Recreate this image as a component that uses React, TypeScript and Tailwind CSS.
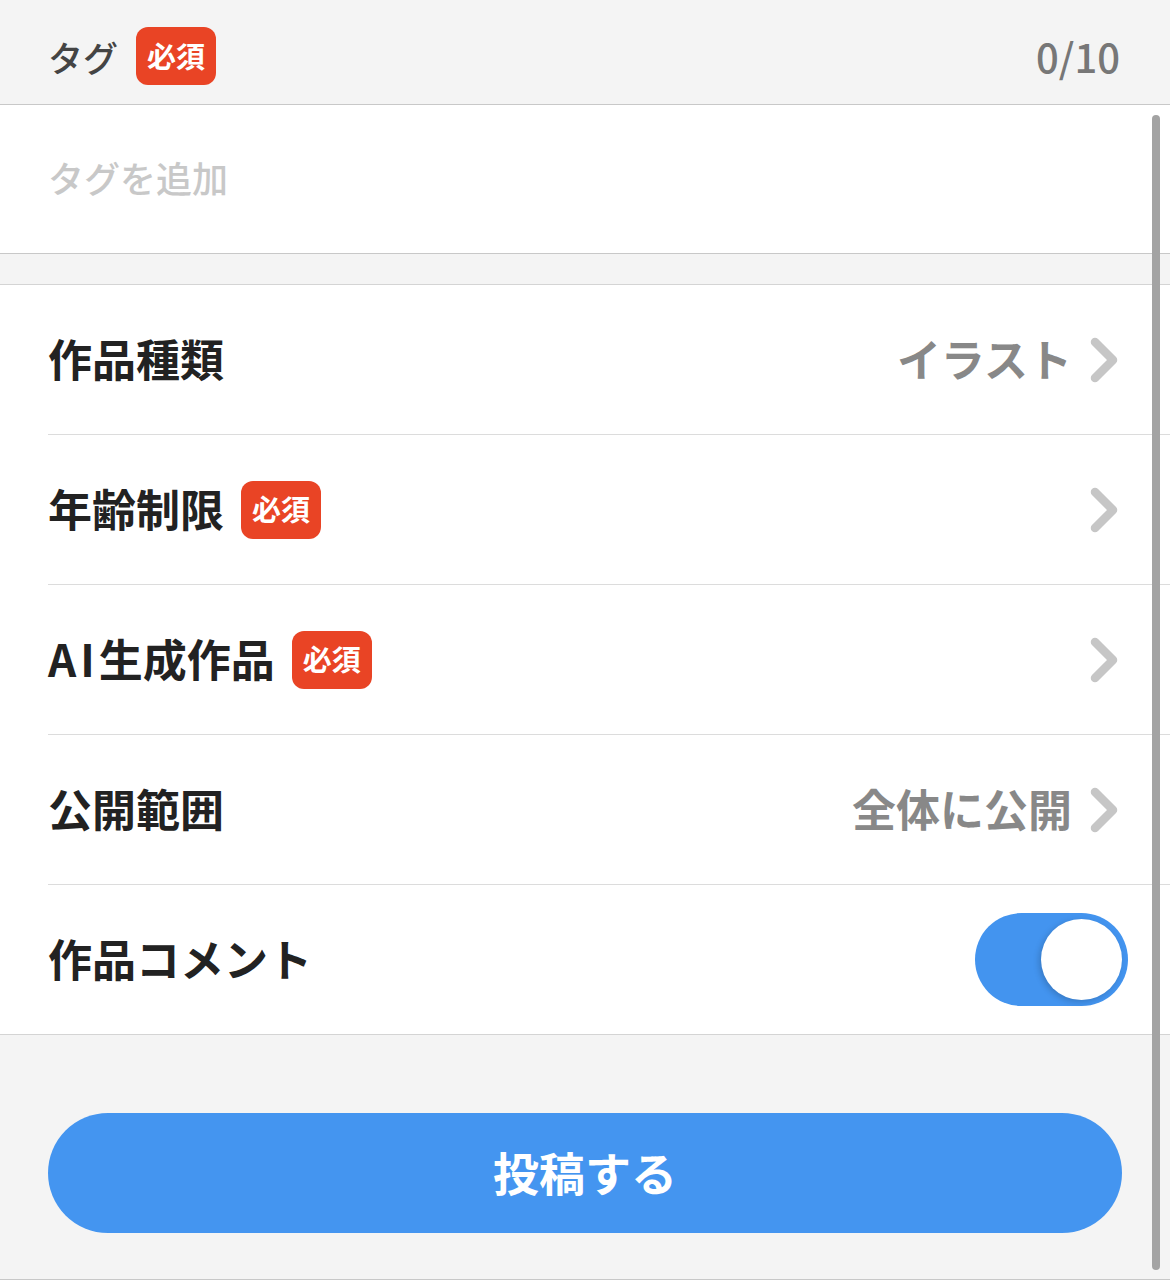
import React from "react";

// ---------- Tipos ----------
type Row = {
  label: string;
  required?: boolean;
  value?: string;
  toggle?: boolean;
};

const rows: Row[] = [
  { label: "作品種類", value: "イラスト" },
  { label: "年齢制限", required: true },
  { label: "AI生成作品", required: true },
  { label: "公開範囲", value: "全体に公開" },
  { label: "作品コメント", toggle: true },
];

const font = { fontFamily: '"Noto Sans CJK JP", "Noto Sans", sans-serif' };

// ---------- Partes ----------
function RequiredBadge() {
  return (
    <span className="inline-flex h-[58px] w-[80px] items-center justify-center rounded-[12px] bg-[#e94425] pb-[2px] text-[29px] font-bold leading-none text-white">
      必須
    </span>
  );
}

function Chevron() {
  return (
    <svg width="32" height="50" viewBox="0 0 32 50" className="shrink-0">
      <polyline
        points="7,7 25,25 7,43"
        fill="none"
        stroke="#c6c6c6"
        strokeWidth="8.5"
        strokeLinecap="round"
        strokeLinejoin="round"
      />
    </svg>
  );
}

function Toggle() {
  return (
    <div className="flex h-[93px] w-[153px] items-center justify-end rounded-full bg-[#4394ef] pr-[6px]">
      <div className="h-[81px] w-[81px] rounded-full bg-white shadow-[-2px_2px_6px_rgba(0,0,0,0.18)]" />
    </div>
  );
}

function Label({ text }: { text: string }) {
  // "AI" fica um pouco mais espaçado no original
  if (text.startsWith("AI")) {
    return (
      <span className="pb-[4px] text-[44px] font-bold leading-none text-[#222]">
        <span className="tracking-[4px]">AI</span>
        {text.slice(2)}
      </span>
    );
  }
  return <span className="pb-[4px] text-[44px] font-bold leading-none text-[#222]">{text}</span>;
}

// ---------- App ----------
export default function App() {
  return (
    <div
      className="relative flex h-[1280px] w-[1170px] flex-col overflow-hidden border-b border-[#c8c8c8] bg-[#f4f4f4]"
      style={font}
    >
      {/* Cabeçalho da tag */}
      <div className="flex h-[105px] shrink-0 items-center justify-between border-b border-[#c8c8c8] pl-[48px] pr-[50px] pt-[8px]">
        <div className="flex items-center gap-[18px]">
          <span className="text-[35px] font-medium leading-none text-[#444]">タグ</span>
          <RequiredBadge />
        </div>
        <span className="text-[40px] font-medium leading-none text-[#777]">0/10</span>
      </div>

      {/* Campo de tag */}
      <div className="flex h-[149px] shrink-0 items-center border-b border-[#c8c8c8] bg-white pl-[48px]">
        <span className="pb-[4px] text-[36px] font-medium leading-none text-[#c8c8c8]">タグを追加</span>
      </div>

      <div className="h-[31px] shrink-0 border-b border-[#d4d4d4]" />

      {/* Lista de opções */}
      <div className="shrink-0 border-b border-[#d4d4d4] bg-white">
        {rows.map((row, i) => (
          <div key={row.label} className="pl-[48px]">
            <div
              className={
                i < rows.length - 1
                  ? "flex h-[150px] items-center justify-between border-b border-[#dcdcdc] pr-[50px]"
                  : "flex h-[149px] items-center justify-between pr-[42px]"
              }
            >
              <div className="flex items-center gap-[17px]">
                <Label text={row.label} />
                {row.required && <RequiredBadge />}
              </div>
              {row.toggle ? (
                <Toggle />
              ) : (
                <div className="flex items-center gap-[16px]">
                  {row.value && (
                    <span className="pb-[4px] text-[44px] font-bold leading-none text-[#888]">{row.value}</span>
                  )}
                  <Chevron />
                </div>
              )}
            </div>
          </div>
        ))}
      </div>

      {/* Botão */}
      <div className="px-[48px] pt-[78px]">
        <button className="flex h-[120px] w-full items-center justify-center rounded-full bg-[#4495f0] pb-[4px] text-[46px] font-bold leading-none text-white">
          投稿する
        </button>
      </div>

      {/* Indicador de rolagem */}
      <div className="absolute right-[10px] top-[115px] h-[1155px] w-[8px] rounded-full bg-[#a3a3a3]" />
    </div>
  );
}
